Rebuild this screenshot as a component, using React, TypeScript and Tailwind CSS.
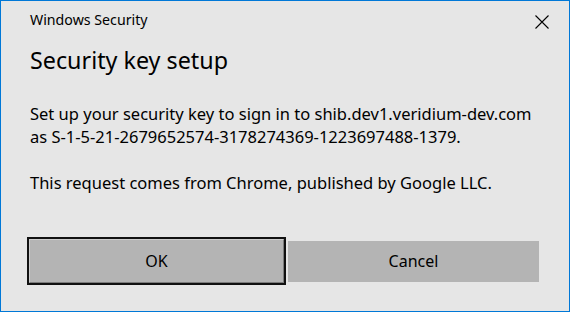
import React from 'react';

const font = { fontFamily: '"Noto Sans", "Open Sans", Arial, sans-serif' };

function CloseIcon() {
  return (
    <svg width="14" height="14" viewBox="0 0 14 14" className="block">
      <path d="M0.5 0.5 L13.5 13.5 M13.5 0.5 L0.5 13.5" stroke="#000" strokeWidth="1.1" fill="none" />
    </svg>
  );
}

export default function App() {
  return (
    <div
      className="w-[570px] h-[312px] border border-[#0078d7] bg-[#e6e6e6] text-black flex flex-col overflow-hidden"
      style={font}
    >
      {/* Title bar */}
      <div className="flex items-start justify-between pl-[29px] pr-[20px] pt-[8px] h-[40px]">
        <span className="text-[14.2px] leading-[22px]">Windows Security</span>
        <button className="mt-[6px]">
          <CloseIcon />
        </button>
      </div>

      {/* Heading */}
      <h1 className="pl-[29px] text-[23.3px] leading-[32px] mt-[3px]">Security key setup</h1>

      {/* Body */}
      <div className="pl-[29px] pr-[10px] mt-[26px] text-[16.5px] leading-[23px] whitespace-nowrap">
        <p>
          Set up your security key to sign in to shib.dev1.veridium-dev.com
          <br />
          as S-1-5-21-2679652574-3178274369-1223697488-1379.
        </p>
        <p className="mt-[23px]">This request comes from Chrome, published by Google LLC.</p>
      </div>

      {/* Buttons */}
      <div className="mt-auto mb-[26px] flex items-center pl-[26px] gap-[2px]">
        <button className="w-[259px] h-[48px] border-2 border-[#111] p-0">
          <div className="w-full h-full border border-t-[#cdcdcd] border-l-[#cdcdcd] border-r-[#7c7c7c] border-b-[#7c7c7c] bg-[#b4b4b4] flex items-center justify-center text-[16px]">
            OK
          </div>
        </button>
        <button className="w-[251px] h-[41px] bg-[#b4b4b4] flex items-center justify-center text-[16px]">
          Cancel
        </button>
      </div>
    </div>
  );
}
